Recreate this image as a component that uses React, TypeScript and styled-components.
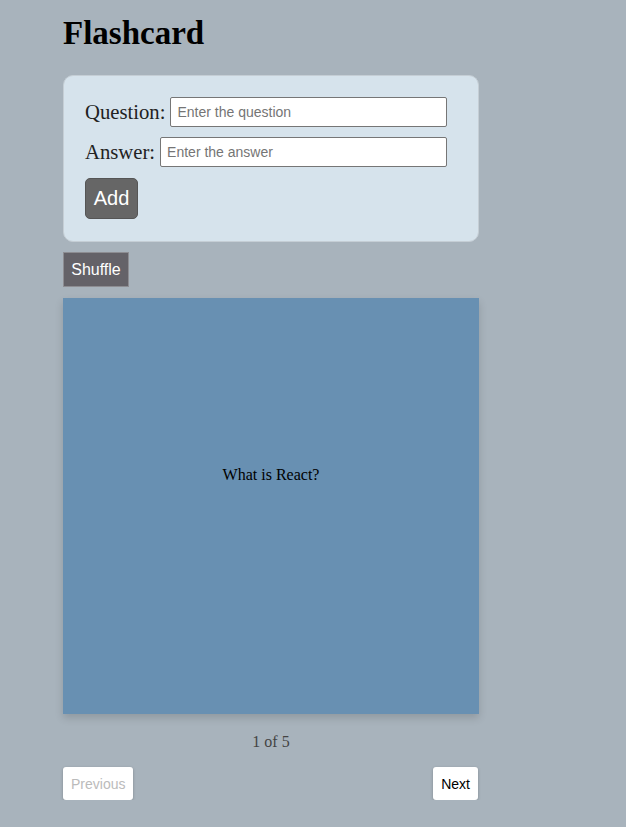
import React from "react";
import styled, { createGlobalStyle } from "styled-components";

const Global = createGlobalStyle`
  html, body { background: #a8b3bc; }
  body { margin: 8px; font-family: "Liberation Serif", "Times New Roman", serif; }
`;

const Page = styled.div`
  width: 416px;
  margin-left: 55px;
`;

const Title = styled.h1`
  font-size: 33px;
  font-weight: bold;
  margin: 7px 0 23px;
  color: #000;
`;

const FormPanel = styled.div`
  background: #d6e3ec;
  border: 1px solid #c5ced5;
  border-radius: 10px;
  padding: 21px 21px 22px;
  display: flex;
  flex-direction: column;
  gap: 10px;
`;

const Row = styled.label`
  display: flex;
  align-items: center;
  gap: 5px;
  padding-right: 10px;
  font-size: 20.7px;
  color: #222;
`;

const Input = styled.input`
  flex: 1;
  height: 30px;
  box-sizing: border-box;
  border: 1px solid #767676;
  border-radius: 2px;
  padding: 0 6px;
  font-family: "Liberation Sans", Arial, sans-serif;
  font-size: 14px;
  background: #fff;
  &::placeholder { color: #757575; }
`;

const AddButton = styled.button`
  align-self: flex-start;
  margin-top: 1px;
  width: 53px;
  height: 41px;
  background: #666;
  border: 1px solid #555;
  border-radius: 5px;
  color: #fff;
  font-family: "Liberation Sans", Arial, sans-serif;
  font-size: 20px;
  padding: 0;
`;

const ShuffleButton = styled.button`
  margin-top: 10px;
  width: 66px;
  height: 35px;
  background: #646268;
  border: 1px solid #8d8d92;
  color: #fff;
  font-family: "Liberation Sans", Arial, sans-serif;
  font-size: 16px;
  padding: 0;
`;

const Card = styled.div`
  margin-top: 11px;
  width: 416px;
  height: 416px;
  background: #6890b2;
  box-shadow: 0 4px 8px rgba(0, 0, 0, 0.15);
  display: flex;
  align-items: center;
  justify-content: center;
  box-sizing: border-box;
  padding-bottom: 62px;
  font-size: 16px;
  color: #000;
`;

const Counter = styled.p`
  text-align: center;
  margin: 19px 0 0;
  font-size: 16px;
  color: #444;
`;

const Nav = styled.div`
  display: flex;
  justify-content: space-between;
  margin-top: 16px;
  padding-right: 1px;
`;

const NavButton = styled.button<{ $disabled?: boolean }>`
  height: 33px;
  background: #fff;
  border: none;
  border-radius: 3px;
  box-shadow: 0 1px 3px rgba(0, 0, 0, 0.25);
  padding: 0 8px;
  font-family: "Liberation Sans", Arial, sans-serif;
  font-size: 14px;
  color: ${(p) => (p.$disabled ? "#bbb" : "#000")};
`;

export default function App() {
  return (
    <>
      <Global />
      <Page>
        <Title>Flashcard</Title>
        <FormPanel>
          <Row>
            Question:
            <Input placeholder="Enter the question" />
          </Row>
          <Row>
            Answer:
            <Input placeholder="Enter the answer" />
          </Row>
          <AddButton>Add</AddButton>
        </FormPanel>
        <ShuffleButton>Shuffle</ShuffleButton>
        <Card>What is React?</Card>
        <Counter>1 of 5</Counter>
        <Nav>
          <NavButton $disabled disabled>Previous</NavButton>
          <NavButton>Next</NavButton>
        </Nav>
      </Page>
    </>
  );
}
